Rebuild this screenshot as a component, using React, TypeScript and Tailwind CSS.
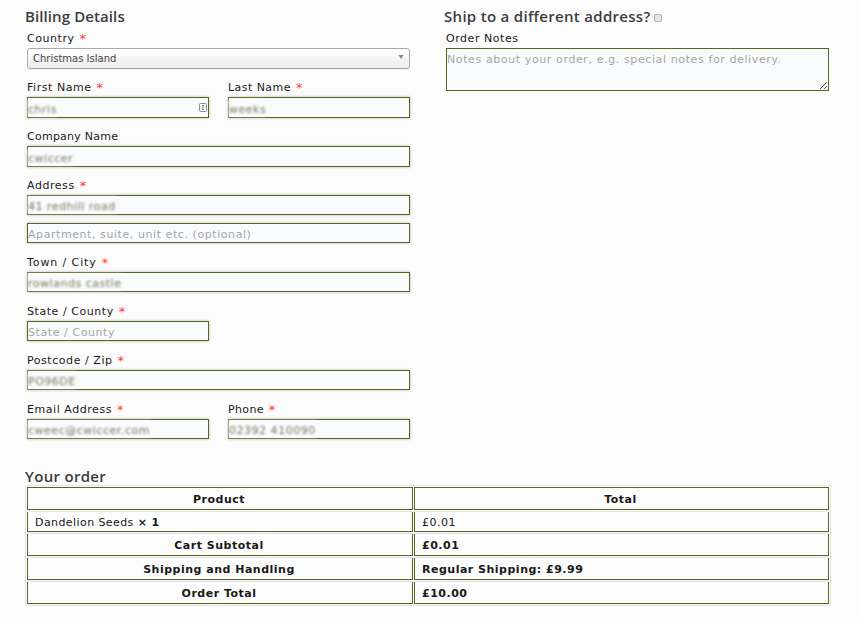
import type { ReactNode } from "react";

function Label({ children, required, tone = "text-[#ff3347]", spacing = "tracking-[0.55px]" }: { children: ReactNode; required?: boolean; tone?: string; spacing?: string }) {
  return (
    <div className={`flex h-[19px] whitespace-pre pt-px text-[11px] leading-[18px] text-[#191919] ${spacing}`}>
      {children}
      {required && <span className={`ml-[5px] text-[13px] ${tone}`}>*</span>}
    </div>
  );
}

function Field({ value, placeholder, tall, badge, className = "" }: { value?: string; placeholder?: string; tall?: boolean; badge?: boolean; className?: string }) {
  return (
    <div
      className={`flex items-center justify-between border border-[#56661d] bg-[#f9fbfd] shadow-[0_0_3px_#bbb] ${tall ? "h-[21px]" : "h-5"} ${className}`}
    >
      {value && (
        <span className="-ml-0.5 whitespace-pre bg-[#f9fbfd]/50 pl-0.5 pt-[3px] text-[11px] leading-[15px] tracking-[0.52px] text-[#77775c] blur-[1.3px]">{value}</span>
      )}
      {placeholder && <span className="whitespace-pre pt-[3px] text-[11px] leading-4 tracking-[0.57px] text-[#a6a6a6]">{placeholder}</span>}
      {badge && (
        <svg width="8" height="9" viewBox="0 0 8 9" className="mr-px" fill="none" stroke="#888">
          <rect x=".5" y=".5" width="7" height="8" rx="1" />
          <path d="M3 2.5h2M3 6.5h2M4 2.5v4" />
        </svg>
      )}
    </div>
  );
}

const rows = [
  { name: "Cart Subtotal", total: "£0.01" },
  { name: "Shipping and Handling", total: "Regular Shipping: £9.99" },
  { name: "Order Total", total: "£10.00" },
];

const heading = "h-6 whitespace-nowrap font-['Open_Sans',sans-serif] text-[15px] font-semibold leading-6 text-[#3c3c3c]";

export default function App() {
  return (
    <main className="h-[617px] w-[861px] overflow-hidden bg-[#fcfcfc] pl-[25px] pt-1 font-['DejaVu_Sans',sans-serif]">
      <div className="flex h-[460px] gap-[34px]">
        <section className="w-[385px] pl-0.5">
          <h3 className={`${heading} -ml-0.5 mb-px tracking-[0.1px]`}>Billing Details</h3>
          <Label required>Country</Label>
          <div className="flex h-[21px] items-center justify-between rounded-[3px] border border-[#aaa] bg-linear-to-b from-white from-20% via-[#f4f4f4] via-50% to-[#eee] px-[5px] text-[10px] text-[#444] shadow-[0_1px_0_#eee]">
            <span>Christmas Island</span>
            <svg width="6" height="4" viewBox="0 0 6 4" className="mb-1">
              <path d="M.5 0h5L3 4z" fill="#888" />
            </svg>
          </div>
          <div className="mt-[9px] flex gap-[19px]">
            <div className="w-[182px]">
              <Label required>First Name</Label>
              <Field value="chris" tall badge />
            </div>
            <div className="w-[182px]">
              <Label required tone="text-[#ff4a1a]" spacing="tracking-[0.45px]">Last Name</Label>
              <Field value="weeks" tall />
            </div>
          </div>
          <div className="mt-[9px]">
            <Label spacing="tracking-[0.25px]">Company Name</Label>
            <Field value="cwiccer" tall />
          </div>
          <div className="mt-[9px]">
            <Label required>Address</Label>
            <Field value="41 redhill road" />
            <Field placeholder="Apartment, suite, unit etc. (optional)" className="mt-2" />
          </div>
          <div className="mt-[10px]">
            <Label required tone="text-[#ff4a1a]" spacing="tracking-[0.9px]">Town / City</Label>
            <Field value="rowlands castle" />
          </div>
          <div className="mt-[10px]">
            <Label required>State / County</Label>
            <Field placeholder="State / County" className="w-[182px]" />
          </div>
          <div className="mt-[10px]">
            <Label required>Postcode / Zip</Label>
            <Field value="PO96DE" />
          </div>
          <div className="mt-[10px] flex gap-[19px]">
            <div className="w-[182px]">
              <Label required tone="text-[#ff4a1a]">Email Address</Label>
              <Field value="cweec@cwiccer.com" />
            </div>
            <div className="w-[182px]">
              <Label required spacing="tracking-[0.35px]">Phone</Label>
              <Field value="02392 410090" />
            </div>
          </div>
        </section>
        <section className="w-[385px] pl-0.5">
          <h3 className={`${heading} -ml-0.5 mb-px flex items-center`}>
            <span className="w-[210px] tracking-[0.3px]">Ship to a different address?</span>
            <span className="mt-[3px] h-2 w-2 rounded-[2px] border border-[#b5b5b5] bg-[#e4e4e4]" />
          </h3>
          <Label>Order Notes</Label>
          <div className="flex h-[43px] justify-between border border-[#56661d] bg-[#f9fbfd]">
            <span className="whitespace-pre pt-[3px] text-[11px] leading-4 tracking-[0.61px] text-[#a6a6a6]">Notes about your order, e.g. special notes for delivery.</span>
            <svg width="9" height="9" viewBox="0 0 9 9" className="self-end" stroke="#555" strokeWidth="1">
              <path d="M1 8L8 1M5 8L8 5" />
            </svg>
          </div>
        </section>
      </div>
      <h3 className={`${heading} tracking-[0.3px]`}>Your order</h3>
      <div className="-mt-[3px] h-[121px] w-[806px] rounded-[2px] border border-[#e4e2e8] px-px pt-px text-[11px] leading-4 tracking-[0.5px] text-[#191919]">
        <div className="flex h-[23px] gap-px font-bold">
          <div className="flex w-[386px] items-center justify-center border border-[#56661d] pr-0.5 pt-0.5">Product</div>
          <div className="flex w-[415px] items-center justify-center border border-[#56661d] pr-0.5 pt-0.5">Total</div>
        </div>
        <div className="mt-px flex h-[21px] gap-px border-t border-[#e4e6e2]">
          <div className="flex w-[386px] items-center whitespace-pre border-x border-b border-[#56661d] pl-[7px] pt-0.5 tracking-[0.42px]">
            Dandelion Seeds <b>× 1</b>
          </div>
          <div className="flex w-[415px] items-center border-x border-b border-[#56661d] pl-[7px] pt-0.5">£0.01</div>
        </div>
        {rows.map((r) => (
          <div key={r.name} className="mt-px flex h-[23px] gap-px border-t border-[#e4e2e8] font-bold">
            <div className="flex w-[386px] items-center justify-center border-x border-b border-[#56661d] pr-0.5 pt-0.5">{r.name}</div>
            <div className="flex w-[415px] items-center border-x border-b border-[#56661d] pl-[7px] pt-0.5">{r.total}</div>
          </div>
        ))}
      </div>
    </main>
  );
}
